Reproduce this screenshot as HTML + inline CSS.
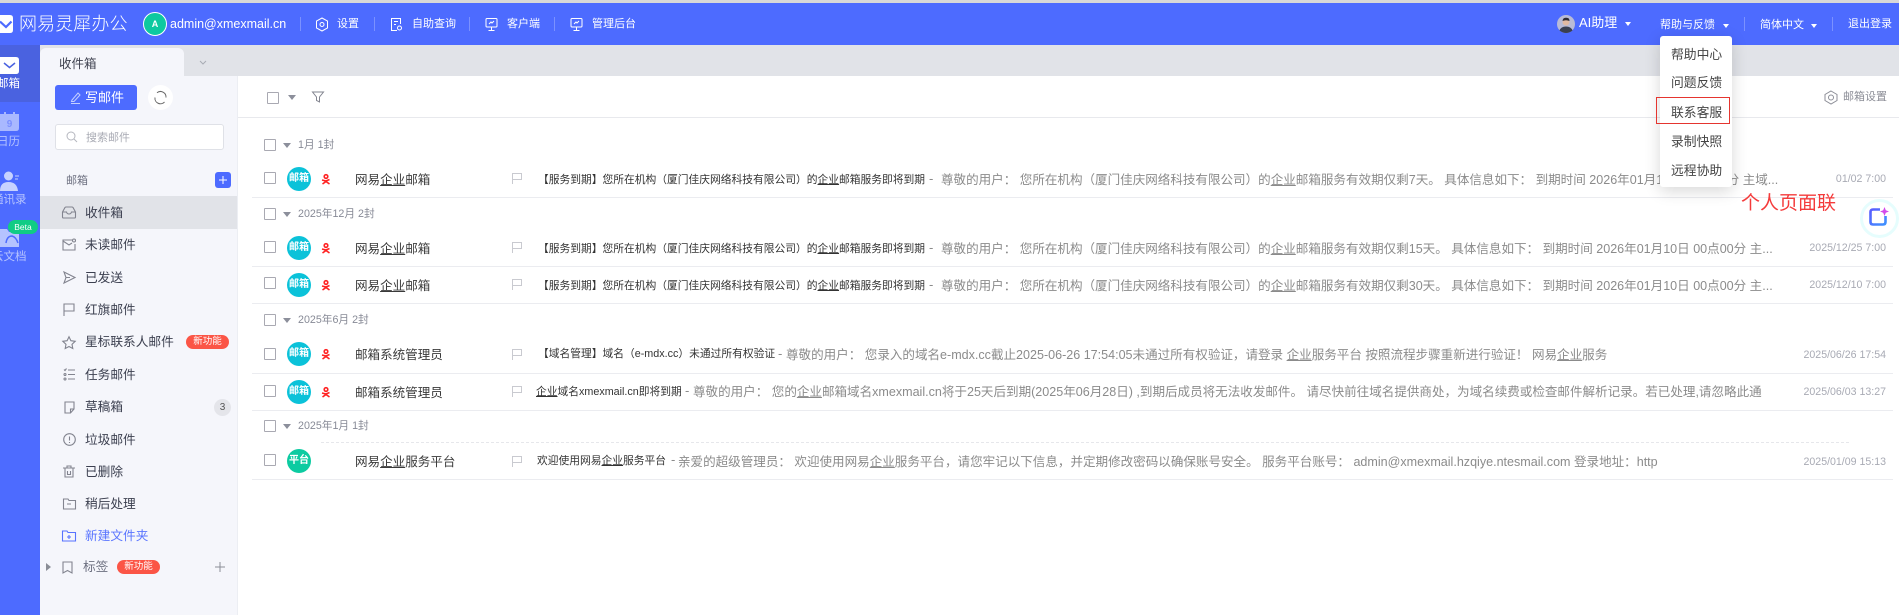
<!DOCTYPE html>
<html lang="zh-CN"><head><meta charset="utf-8"><title>网易灵犀办公</title>
<style>
*{box-sizing:border-box}
html,body{margin:0;padding:0;width:1899px;height:615px;overflow:hidden;background:#fff;font-family:"Liberation Sans","Noto Sans CJK SC",sans-serif}
.a{position:absolute;white-space:nowrap}
.t{position:absolute;white-space:nowrap;line-height:18px;height:18px}
svg{position:absolute;overflow:visible}
.top{color:#fff;font-size:11px}
.sep{position:absolute;top:17px;width:1px;height:14px;background:#7b91ff}
.nav{position:absolute;left:85px;font-size:12.7px;line-height:20px;color:#3c4050;white-space:nowrap}
.cb{position:absolute;width:12px;height:12px;border:1px solid #a9a9b2;border-radius:1px;background:#fff}
.tri{position:absolute;width:0;height:0;border-left:4px solid transparent;border-right:4px solid transparent;border-top:5px solid #8c8f9b}
.grp{position:absolute;left:298px;font-size:10.7px;line-height:16px;color:#878a96;white-space:nowrap}
.av{position:absolute;left:287px;width:24px;height:24px;border-radius:50%;color:#fff;font-size:10px;font-weight:bold;line-height:24px;text-align:center;background:#0bc2d9}
.snd{position:absolute;left:355px;font-size:12.55px;line-height:18px;color:#3a3a3a;white-space:nowrap}
.sub{position:absolute;font-size:10.75px;line-height:18px;color:#333;white-space:nowrap}
.sum{position:absolute;font-size:12.55px;line-height:18px;color:#8b8b8b;white-space:nowrap}
.dash{position:absolute;font-size:13px;line-height:18px;color:#8b8b8b}
.dt{position:absolute;font-size:10.6px;line-height:18px;color:#a8aab4;white-space:nowrap;text-align:right}
.ln{position:absolute;left:252px;width:1641px;height:1px;background:#ebecf0}
u{text-underline-offset:1px}
.mi{position:absolute;left:1671px;font-size:12.8px;line-height:18px;color:#444;white-space:nowrap}
.nb{position:absolute;width:43px;height:14px;border-radius:7px;background:#fb5546;color:#fff;font-size:9.5px;line-height:14px;text-align:center}
.rl{position:absolute;font-size:11.5px;line-height:14px;white-space:nowrap;color:#b5c3ff}
</style></head><body>

<!-- top strip -->
<div class="a" style="left:0;top:0;width:1899px;height:3px;background:#d8d8d8"></div>
<div class="a" style="left:0;top:3px;width:1899px;height:42px;background:#4d6bff"></div>

<!-- logo -->
<svg style="left:0;top:15px" width="13" height="18" viewBox="0 0 13 18"><path d="M-4 0H10Q13 0 13 3V15Q13 18 10 18H-4Z" fill="#fff"/><path d="M0 6.500L6 12L11.500 6.500" fill="none" stroke="#4d6bff" stroke-width="2.200"/></svg>
<div class="t" style="left:19px;top:15px;font-size:18px;color:#fff;font-weight:300;letter-spacing:.1px">网易灵犀办公</div>
<div class="a" style="left:143px;top:12px;width:24px;height:24px;border-radius:50%;background:#0dc9a0;border:1px solid #fff;color:#fff;font-size:9px;font-weight:bold;text-align:center;line-height:22px">A</div>
<div class="t top" style="left:170px;top:15px;font-size:12.5px">admin@xmexmail.cn</div>
<div class="sep" style="left:300px"></div>
<svg style="left:315px;top:17px" width="14" height="15" viewBox="0 0 14 15" fill="none" stroke="#fff" stroke-width="1"><path d="M7 1L12.500 4V11L7 14L1.500 11V4Z"/><circle cx="7" cy="7.500" r="2"/></svg>
<div class="t top" style="left:337px;top:15px">设置</div>
<div class="sep" style="left:374px"></div>
<svg style="left:390px;top:17px" width="13" height="15" viewBox="0 0 13 15" fill="none" stroke="#fff" stroke-width="1"><path d="M7 13.500H1.500V1.500H10.500V7"/><path d="M4 4.500H8M4 7.500H6"/><circle cx="9.500" cy="11" r="2"/></svg>
<div class="t top" style="left:412px;top:15px">自助查询</div>
<div class="sep" style="left:469px"></div>
<svg style="left:485px;top:17px" width="13" height="15" viewBox="0 0 13 15" fill="none" stroke="#fff" stroke-width="1"><rect x="1" y="1.500" width="11" height="8.500" rx="1"/><path d="M6.500 10V13M3.500 13.500H9.500M4 7L6 5L7 6L9 4"/></svg>
<div class="t top" style="left:507px;top:15px">客户端</div>
<div class="sep" style="left:554px"></div>
<svg style="left:570px;top:17px" width="13" height="15" viewBox="0 0 13 15" fill="none" stroke="#fff" stroke-width="1"><rect x="1" y="1.500" width="11" height="8.500" rx="1"/><path d="M6.500 10V13M3.500 13.500H9.500M4 7L6 5L7 6L9 4"/></svg>
<div class="t top" style="left:592px;top:15px">管理后台</div>

<!-- top right -->
<svg style="left:1557px;top:15px" width="18" height="18" viewBox="0 0 18 18"><circle cx="9" cy="9" r="9" fill="#b9bbd6"/><circle cx="9" cy="7" r="3.500" fill="#e1b9a2"/><path d="M5.500 6Q6 2.500 9 2.800Q12.500 2.500 12.500 6Q9 4.500 5.500 6Z" fill="#2d2a33"/><path d="M2.500 15.500Q4 11.500 9 11.500Q14 11.500 15.500 15.500Q12.500 18 9 18Q5.500 18 2.500 15.500Z" fill="#3a3f50"/></svg>
<div class="t" style="left:1579px;top:14px;color:#fff;font-size:13px">AI助理</div>
<div class="tri" style="left:1625px;top:22px;border-top-color:#fff;border-left-width:3.500px;border-right-width:3.500px;border-top-width:4px"></div>
<div class="t top" style="left:1660px;top:16px">帮助与反馈</div>
<div class="tri" style="left:1723px;top:24px;border-top-color:#fff;border-left-width:3.500px;border-right-width:3.500px;border-top-width:4px"></div>
<div class="sep" style="left:1744px"></div>
<div class="t top" style="left:1760px;top:16px">简体中文</div>
<div class="tri" style="left:1811px;top:24px;border-top-color:#fff;border-left-width:3.500px;border-right-width:3.500px;border-top-width:4px"></div>
<div class="sep" style="left:1832px"></div>
<div class="t top" style="left:1848px;top:15px">退出登录</div>

<!-- rail -->
<div class="a" style="left:0;top:45px;width:40px;height:570px;background:#4d6bff"></div>
<div class="a" style="left:0;top:45px;width:40px;height:57px;background:#4a62e0"></div>
<svg style="left:0;top:57px" width="19" height="17" viewBox="0 0 19 17"><path d="M-3 0H16Q19 0 19 3V14Q19 17 16 17H-3Z" fill="#fff"/><path d="M4 6L9.500 10.500L15 6" fill="none" stroke="#4a62e0" stroke-width="1.500"/></svg>
<div class="rl" style="left:-3px;top:77px;color:#fff">邮箱</div>
<svg style="left:0;top:112px" width="19" height="19" viewBox="0 0 19 19"><path d="M-3 2H19V16Q19 19 16 19H-3Z" fill="#a9b8ff"/><rect x="4" y="0" width="2" height="4" fill="#a9b8ff"/><rect x="13" y="0" width="2" height="4" fill="#a9b8ff"/><text x="9.500" y="15" text-anchor="middle" font-size="10" font-weight="bold" fill="#7c90ff" font-family="Liberation Sans">9</text></svg>
<div class="rl" style="left:-3px;top:135px">日历</div>
<svg style="left:0;top:171px" width="20" height="21" viewBox="0 0 20 21"><circle cx="8.500" cy="5" r="4.500" fill="#c7d2ff"/><path d="M0 20Q0 11 8.500 11Q17 11 18 20Z" fill="#c7d2ff"/><path d="M15 5H19M15 8H18" stroke="#c7d2ff" stroke-width="1"/></svg>
<div class="rl" style="left:-8px;top:193px">通讯录</div>
<svg style="left:0;top:228px" width="19" height="19" viewBox="0 0 19 19"><path d="M-3 1H7L9 4H19V19H-3Z" fill="#b5c3ff"/><path d="M6 15Q7 8 12 8Q16 9 18 15" fill="none" stroke="#4d6bff" stroke-width="1.500"/></svg>
<div class="a" style="left:8px;top:220px;width:30px;height:14px;border-radius:7px;background:#10cc85;color:#fff;font-size:8.5px;line-height:14px;text-align:center">Beta</div>
<div class="rl" style="left:-8px;top:250px">云文档</div>

<!-- tab strip -->
<div class="a" style="left:40px;top:45px;width:1859px;height:31px;background:#e1e3e8"></div>
<div class="a" style="left:40px;top:48px;width:144px;height:28px;background:#f5f6fb;border-radius:6px 6px 0 0"></div>
<div class="t" style="left:59px;top:55px;font-size:12.500px;color:#3f4250">收件箱</div>
<svg style="left:199px;top:60px" width="8" height="5" viewBox="0 0 8 5"><path d="M1 1L4 4L7 1" fill="none" stroke="#a9acb5" stroke-width="1"/></svg>

<!-- sidebar -->
<div class="a" style="left:40px;top:76px;width:198px;height:539px;background:#f5f6fb;border-right:1px solid #eceef3"></div>
<div class="a" style="left:55px;top:85px;width:82px;height:25px;background:#4d6bff;border-radius:3px"></div>
<svg style="left:70px;top:91px" width="12" height="13" viewBox="0 0 12 13" fill="none" stroke="#c4cfff" stroke-width="1"><path d="M2 9L8 2L10 4L4 10.500L1.500 10.500Z"/><path d="M1 12.500H10"/></svg>
<div class="t" style="left:85px;top:89px;font-size:13px;color:#fff">写邮件</div>
<div class="a" style="left:148px;top:85px;width:25px;height:25px;border-radius:50%;background:#fff"></div>
<svg style="left:154px;top:91px" width="13" height="13" viewBox="0 0 13 13" fill="none" stroke="#666" stroke-width="1"><path d="M3 1.800A5.500 5.500 0 0 1 12 6.500M10.500 11A5.500 5.500 0 0 1 1 6.500"/></svg>
<div class="a" style="left:55px;top:124px;width:169px;height:26px;background:#fff;border:1px solid #dfe1e7;border-radius:3px"></div>
<svg style="left:66px;top:131px" width="12" height="12" viewBox="0 0 12 12" fill="none" stroke="#b5b7bf" stroke-width="1"><circle cx="5" cy="5" r="4"/><path d="M8 8L11 11"/></svg>
<div class="t" style="left:86px;top:129px;font-size:11px;color:#a9abb4">搜索邮件</div>
<div class="t" style="left:66px;top:172px;font-size:11px;color:#6d7080">邮箱</div>
<div class="a" style="left:215px;top:172px;width:16px;height:16px;background:#4d6bff;border-radius:3px"></div>
<svg style="left:219px;top:176px" width="8" height="8" viewBox="0 0 8 8"><path d="M4 0V8M0 4H8" stroke="#fff" stroke-width="1"/></svg>

<div class="a" style="left:40px;top:196px;width:197px;height:33px;background:#e1e3e8"></div>
<svg style="left:62px;top:206px" width="14" height="13" viewBox="0 0 14 13" fill="none" stroke="#82848f" stroke-width="1.100"><path d="M.5 6L3 1.500Q3.500 1 4 1H10Q10.500 1 11 1.500L13.500 6V11Q13.500 12 12.500 12H1.500Q.5 12 .5 11Z"/><path d="M.5 6H4.500Q5 8 7 8Q9 8 9.500 6H13.500"/></svg>
<div class="nav" style="top:203px">收件箱</div>
<svg style="left:62px;top:238px" width="14" height="13" viewBox="0 0 14 13" fill="none" stroke="#82848f" stroke-width="1.100"><path d="M10 2H1V12H13V6"/><path d="M1 3L7 7L10 5"/><circle cx="12" cy="2.500" r="1.500"/></svg>
<div class="nav" style="top:235px">未读邮件</div>
<svg style="left:63px;top:271px" width="13" height="13" viewBox="0 0 13 13" fill="none" stroke="#82848f" stroke-width="1.100"><path d="M1 1L12 6.500L1 12L3 6.500ZM3 6.500H7"/></svg>
<div class="nav" style="top:268px">已发送</div>
<svg style="left:63px;top:303px" width="12" height="13" viewBox="0 0 12 13" fill="none" stroke="#82848f" stroke-width="1.100"><path d="M1 13V1H11V8H1"/></svg>
<div class="nav" style="top:300px">红旗邮件</div>
<svg style="left:62px;top:336px" width="14" height="13" viewBox="0 0 14 13" fill="none" stroke="#82848f" stroke-width="1.100"><path d="M7 .8L8.900 4.700L13.200 5.300L10 8.300L10.800 12.500L7 10.500L3.200 12.500L4 8.300L.8 5.300L5.100 4.700Z"/></svg>
<div class="nav" style="top:332px">星标联系人邮件</div>
<div class="nb" style="left:186px;top:335px">新功能</div>
<svg style="left:63px;top:368px" width="12" height="13" viewBox="0 0 12 13" fill="none" stroke="#82848f" stroke-width="1.100"><path d="M5 2H12M5 6.500H12M5 11H12M1 1.500L2 2.500L3.500 .5"/><circle cx="2" cy="6.500" r="1"/><circle cx="2" cy="11" r="1"/></svg>
<div class="nav" style="top:365px">任务邮件</div>
<svg style="left:64px;top:401px" width="11" height="13" viewBox="0 0 11 13" fill="none" stroke="#82848f" stroke-width="1.100"><path d="M1 1H10V8L6.500 12H1ZM10 8H6.500V12"/></svg>
<div class="nav" style="top:397px">草稿箱</div>
<div class="a" style="left:214px;top:399px;width:17px;height:17px;border-radius:50%;background:#e4e5ea;color:#555;font-size:10px;line-height:17px;text-align:center">3</div>
<svg style="left:63px;top:433px" width="13" height="13" viewBox="0 0 13 13" fill="none" stroke="#82848f" stroke-width="1.100"><circle cx="6.500" cy="6.500" r="5.800"/><path d="M6.500 3.500V7.500M6.500 9V10"/></svg>
<div class="nav" style="top:430px">垃圾邮件</div>
<svg style="left:63px;top:465px" width="12" height="13" viewBox="0 0 12 13" fill="none" stroke="#82848f" stroke-width="1.100"><path d="M0 3H12M4 3V1H8V3M2 3V12H10V3M4.500 6V9.500H7.500V6"/></svg>
<div class="nav" style="top:462px">已删除</div>
<svg style="left:63px;top:498px" width="13" height="12" viewBox="0 0 13 12" fill="none" stroke="#82848f" stroke-width="1.100"><path d="M.5 1H5L6 2.500H12.500V11H.5ZM4 6H8"/></svg>
<div class="nav" style="top:494px">稍后处理</div>
<svg style="left:62px;top:530px" width="14" height="12" viewBox="0 0 14 12" fill="none" stroke="#5873ff" stroke-width="1.100"><path d="M.5 1H5L6 2.500H13.500V11H.5ZM7 5V9M5 7H9"/></svg>
<div class="nav" style="top:526px;color:#5a75ff">新建文件夹</div>
<div class="a" style="left:46px;top:563px;width:0;height:0;border-top:4px solid transparent;border-bottom:4px solid transparent;border-left:5px solid #8a8d96"></div>
<svg style="left:62px;top:561px" width="11" height="13" viewBox="0 0 11 13" fill="none" stroke="#82848f" stroke-width="1.100"><path d="M1 1H10V12L5.500 9.500L1 12Z"/></svg>
<div class="nav" style="left:83px;top:557px;color:#6d7080">标签</div>
<div class="nb" style="left:117px;top:560px">新功能</div>
<svg style="left:215px;top:562px" width="10" height="10" viewBox="0 0 10 10"><path d="M5 0V10M0 5H10" stroke="#8c8e97" stroke-width="1"/></svg>

<!-- toolbar -->
<div class="a" style="left:238px;top:117px;width:1661px;height:1px;background:#e8e9ed"></div>
<div class="cb" style="left:267px;top:92px"></div>
<div class="tri" style="left:288px;top:95px"></div>
<svg style="left:312px;top:91px" width="12" height="12" viewBox="0 0 12 12" fill="none" stroke="#82848f" stroke-width="1"><path d="M.5 1H11.500L7.500 6V11L4.500 9.500V6Z"/></svg>
<svg style="left:1824px;top:90px" width="14" height="15" viewBox="0 0 14 15" fill="none" stroke="#8c8e97" stroke-width="1"><path d="M7 1L13 4.500V10.500L7 14L1 10.500V4.500Z"/><circle cx="7" cy="7.500" r="2.500"/></svg>
<div class="t" style="left:1843px;top:88px;font-size:11px;color:#8b8d96">邮箱设置</div>

<!-- group 1 -->
<div class="cb" style="left:264px;top:139px"></div><div class="tri" style="left:283px;top:143px"></div>
<div class="grp" style="top:137px">1月 1封</div>
<div class="cb" style="left:264px;top:172px"></div>
<div class="av" style="top:167px">邮箱</div>
<svg style="left:322px;top:174px" width="8" height="11" viewBox="0 0 8 11" fill="none" stroke="#f22" stroke-width="1.600"><circle cx="4" cy="2.500" r="1.800"/><path d="M0 6L4 7L7.500 5.500M.5 10L4 7.500L7.500 10"/></svg>
<div class="snd" style="top:171px">网易<u>企业</u>邮箱</div>
<svg style="left:512px;top:173px" width="10" height="11" viewBox="0 0 10 11" fill="none" stroke="#c9cad0" stroke-width="1"><path d="M.5 11V.5H9.500V6.500H.5"/></svg>
<div class="sub" style="left:538px;top:171px">【服务到期】您所在机构（厦门佳庆网络科技有限公司）的<u>企业</u>邮箱服务即将到期</div>
<div class="dash" style="left:929px;top:170px">-</div>
<div class="sum" style="left:941px;top:171px">尊敬的用户： 您所在机构（厦门佳庆网络科技有限公司）的<u>企业</u>邮箱服务有效期仅剩7天。 具体信息如下： 到期时间 2026年01月10日 00点00分 主域...</div>
<div class="dt" style="right:13px;top:170px">01/02 7:00</div>
<div class="ln" style="top:197px"></div>

<!-- group 2 -->
<div class="cb" style="left:264px;top:208px"></div><div class="tri" style="left:283px;top:212px"></div>
<div class="grp" style="top:206px">2025年12月 2封</div>
<div class="cb" style="left:264px;top:241px"></div>
<div class="av" style="top:236px">邮箱</div>
<svg style="left:322px;top:243px" width="8" height="11" viewBox="0 0 8 11" fill="none" stroke="#f22" stroke-width="1.600"><circle cx="4" cy="2.500" r="1.800"/><path d="M0 6L4 7L7.500 5.500M.5 10L4 7.500L7.500 10"/></svg>
<div class="snd" style="top:240px">网易<u>企业</u>邮箱</div>
<svg style="left:512px;top:242px" width="10" height="11" viewBox="0 0 10 11" fill="none" stroke="#c9cad0" stroke-width="1"><path d="M.5 11V.5H9.500V6.500H.5"/></svg>
<div class="sub" style="left:538px;top:240px">【服务到期】您所在机构（厦门佳庆网络科技有限公司）的<u>企业</u>邮箱服务即将到期</div>
<div class="dash" style="left:929px;top:239px">-</div>
<div class="sum" style="left:941px;top:240px">尊敬的用户： 您所在机构（厦门佳庆网络科技有限公司）的<u>企业</u>邮箱服务有效期仅剩15天。 具体信息如下： 到期时间 2026年01月10日 00点00分 主...</div>
<div class="dt" style="right:13px;top:239px">2025/12/25 7:00</div>
<div class="ln" style="top:266px"></div>

<div class="cb" style="left:264px;top:277px"></div>
<div class="av" style="top:273px">邮箱</div>
<svg style="left:322px;top:280px" width="8" height="11" viewBox="0 0 8 11" fill="none" stroke="#f22" stroke-width="1.600"><circle cx="4" cy="2.500" r="1.800"/><path d="M0 6L4 7L7.500 5.500M.5 10L4 7.500L7.500 10"/></svg>
<div class="snd" style="top:277px">网易<u>企业</u>邮箱</div>
<svg style="left:512px;top:279px" width="10" height="11" viewBox="0 0 10 11" fill="none" stroke="#c9cad0" stroke-width="1"><path d="M.5 11V.5H9.500V6.500H.5"/></svg>
<div class="sub" style="left:538px;top:277px">【服务到期】您所在机构（厦门佳庆网络科技有限公司）的<u>企业</u>邮箱服务即将到期</div>
<div class="dash" style="left:929px;top:276px">-</div>
<div class="sum" style="left:941px;top:277px">尊敬的用户： 您所在机构（厦门佳庆网络科技有限公司）的<u>企业</u>邮箱服务有效期仅剩30天。 具体信息如下： 到期时间 2026年01月10日 00点00分 主...</div>
<div class="dt" style="right:13px;top:276px">2025/12/10 7:00</div>
<div class="ln" style="top:303px"></div>

<!-- group 3 -->
<div class="cb" style="left:264px;top:314px"></div><div class="tri" style="left:283px;top:318px"></div>
<div class="grp" style="top:312px">2025年6月 2封</div>
<div class="cb" style="left:264px;top:348px"></div>
<div class="av" style="top:342px">邮箱</div>
<svg style="left:322px;top:349px" width="8" height="11" viewBox="0 0 8 11" fill="none" stroke="#f22" stroke-width="1.600"><circle cx="4" cy="2.500" r="1.800"/><path d="M0 6L4 7L7.500 5.500M.5 10L4 7.500L7.500 10"/></svg>
<div class="snd" style="top:346px">邮箱系统管理员</div>
<svg style="left:512px;top:349px" width="10" height="11" viewBox="0 0 10 11" fill="none" stroke="#c9cad0" stroke-width="1"><path d="M.5 11V.5H9.500V6.500H.5"/></svg>
<div class="sub" style="left:538px;top:345px">【域名管理】域名（e-mdx.cc）未通过所有权验证</div>
<div class="dash" style="left:778px;top:345px">-</div>
<div class="sum" style="left:786px;top:346px">尊敬的用户： 您录入的域名e-mdx.cc截止2025-06-26 17:54:05未通过所有权验证，请登录 <u>企业</u>服务平台 按照流程步骤重新进行验证！ 网易<u>企业</u>服务</div>
<div class="dt" style="right:13px;top:346px">2025/06/26 17:54</div>
<div class="ln" style="top:373px"></div>

<div class="cb" style="left:264px;top:385px"></div>
<div class="av" style="top:380px">邮箱</div>
<svg style="left:322px;top:387px" width="8" height="11" viewBox="0 0 8 11" fill="none" stroke="#f22" stroke-width="1.600"><circle cx="4" cy="2.500" r="1.800"/><path d="M0 6L4 7L7.500 5.500M.5 10L4 7.500L7.500 10"/></svg>
<div class="snd" style="top:384px">邮箱系统管理员</div>
<svg style="left:512px;top:386px" width="10" height="11" viewBox="0 0 10 11" fill="none" stroke="#c9cad0" stroke-width="1"><path d="M.5 11V.5H9.500V6.500H.5"/></svg>
<div class="sub" style="left:536px;top:383px"><u>企业</u>域名xmexmail.cn即将到期</div>
<div class="dash" style="left:685px;top:382px">-</div>
<div class="sum" style="left:693px;top:383px">尊敬的用户： 您的<u>企业</u>邮箱域名xmexmail.cn将于25天后到期(2025年06月28日) ,到期后成员将无法收发邮件。 请尽快前往域名提供商处，为域名续费或检查邮件解析记录。若已处理,请忽略此通</div>
<div class="dt" style="right:13px;top:383px">2025/06/03 13:27</div>
<div class="ln" style="top:410px"></div>

<!-- group 4 -->
<div class="cb" style="left:264px;top:420px"></div><div class="tri" style="left:283px;top:424px"></div>
<div class="grp" style="top:418px">2025年1月 1封</div>
<div class="a" style="left:321px;top:442px;width:1528px;height:0;border-top:1px dashed #e6e7eb"></div>
<div class="cb" style="left:264px;top:454px"></div>
<div class="av" style="top:449px;background:#0ccba1">平台</div>
<div class="snd" style="top:453px">网易<u>企业</u>服务平台</div>
<svg style="left:512px;top:456px" width="10" height="11" viewBox="0 0 10 11" fill="none" stroke="#c9cad0" stroke-width="1"><path d="M.5 11V.5H9.500V6.500H.5"/></svg>
<div class="sub" style="left:537px;top:452px">欢迎使用网易<u>企业</u>服务平台</div>
<div class="dash" style="left:671px;top:451px">-</div>
<div class="sum" style="left:678px;top:453px">亲爱的超级管理员： 欢迎使用网易<u>企业</u>服务平台，请您牢记以下信息，并定期修改密码以确保账号安全。 服务平台账号： admin@xmexmail.hzqiye.ntesmail.com 登录地址：http</div>
<div class="dt" style="right:13px;top:453px">2025/01/09 15:13</div>
<div class="ln" style="top:479px"></div>

<!-- dropdown -->
<div class="a" style="left:1660px;top:36px;width:72px;height:151px;background:#fff;border-radius:3px;box-shadow:0 4px 16px rgba(0,0,0,.16)"></div>
<div class="mi" style="top:46px">帮助中心</div>
<div class="mi" style="top:74px">问题反馈</div>
<div class="mi" style="top:104px">联系客服</div>
<div class="mi" style="top:133px">录制快照</div>
<div class="mi" style="top:162px">远程协助</div>
<div class="a" style="left:1656px;top:97px;width:74px;height:27px;border:1px solid #e5352f"></div>
<div class="a" style="left:1741px;top:192px;font-size:19px;line-height:24px;color:#f43b3b">个人页面联</div>

<!-- floating -->
<div class="a" style="left:1860px;top:199px;width:39px;height:39px;border-radius:50%;border:3px solid #e6fdfd;background:#fff"></div>
<svg style="left:1869px;top:207px" width="20" height="20" viewBox="0 0 20 20"><defs><linearGradient id="g" x1="0" y1="0" x2="1" y2="1"><stop offset="0" stop-color="#5a5cff"/><stop offset="1" stop-color="#3f92ff"/></linearGradient></defs><path d="M11 2.500H4Q1.500 2.500 1.500 5V15Q1.500 17.500 4 17.500H14Q16.500 17.500 16.500 15V9" fill="none" stroke="url(#g)" stroke-width="2.600"/><path d="M15.500 0L16.800 3.200L20 4.500L16.800 5.800L15.500 9L14.200 5.800L11 4.500L14.200 3.200Z" fill="#d34bea"/></svg>

</body></html>
